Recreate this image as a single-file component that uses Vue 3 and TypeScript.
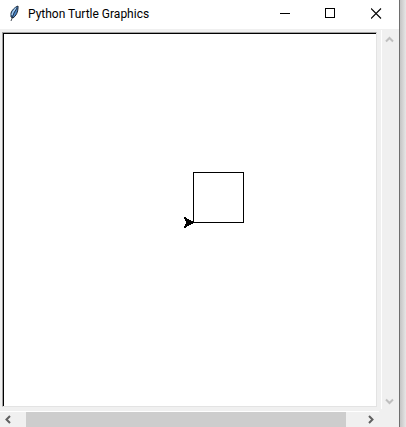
<script setup lang="ts">
import { ref } from 'vue'

const title = ref<string>('Python Turtle Graphics')
const side = 50
</script>

<template>
  <div class="desktop">
    <main class="window">
      <header class="titlebar">
        <svg class="feather" width="12" height="18" viewBox="0 0 12 18" aria-hidden="true">
          <path d="M10 2C7 3 4 6 3 9L3 13L5 14C8 12 10 8 10 4Z" fill="#4b86c8" stroke="#1c2836" stroke-width="1" />
          <path d="M8 4L5 8L4 11" fill="none" stroke="#a5cdf2" stroke-width="1.5" />
          <path d="M9 4L6 9L3 17" fill="none" stroke="#18202c" stroke-width="0.8" />
        </svg>
        <h1 class="title">{{ title }}</h1>
        <nav class="controls">
          <button type="button" aria-label="Minimize">
            <svg width="11" height="11" viewBox="0 0 11 11" shape-rendering="crispEdges"><path d="M1 5.5H11" stroke="#000" /></svg>
          </button>
          <button type="button" aria-label="Maximize">
            <svg width="11" height="11" viewBox="0 0 11 11" shape-rendering="crispEdges"><path d="M.5 .5H9.5V9.5H.5Z" stroke="#000" fill="none" /></svg>
          </button>
          <button type="button" aria-label="Close">
            <svg width="11" height="11" viewBox="0 0 11 11"><path d="M0 .5L10 10.500M10 .5L0 10.500" stroke="#000" stroke-width="1.1" /></svg>
          </button>
        </nav>
      </header>
      <section class="content">
        <div class="canvas">
          <svg class="drawing" width="64" height="60" viewBox="-10 -52 64 60" shape-rendering="crispEdges" role="img" aria-label="Square drawn by the turtle">
            <path :d="`M.5 .5H${side}.5V-${side - 0.5}H.5Z`" fill="none" stroke="#000" />
            <path d="M2 0H0V-1H-2V-2H-4V-3H-6V-4H-7V-5H-9V-3H-8V-1H-7V2H-8V4H-9V6H-7V5H-6V4H-4V3H-2V2H0V1H2Z" fill="#000" />
          </svg>
        </div>
        <div class="scroll vertical">
          <button type="button" aria-label="Scroll up">
            <svg width="9" height="9" viewBox="0 0 9 9"><path d="M1 6.500L4.500 3L8 6.500" /></svg>
          </button>
          <button type="button" aria-label="Scroll down">
            <svg width="9" height="9" viewBox="0 0 9 9"><path d="M1 3.500L4.500 7L8 3.500" /></svg>
          </button>
        </div>
        <div class="scroll horizontal">
          <button type="button" aria-label="Scroll left">
            <svg width="9" height="9" viewBox="0 0 9 9"><path d="M6 1L2.500 4.500L6 8" /></svg>
          </button>
          <div class="thumb"></div>
          <button type="button" aria-label="Scroll right">
            <svg width="9" height="9" viewBox="0 0 9 9"><path d="M3 1L6.500 4.500L3 8" /></svg>
          </button>
        </div>
      </section>
    </main>
  </div>
</template>

<style>
body {
  margin: 0;
}
</style>

<style scoped>
.desktop {
  box-sizing: border-box;
  height: 100vh;
  padding-right: 6px;
  background: linear-gradient(to left, #e6e6e6, #c4c4c4 6px);
}
.window {
  box-sizing: border-box;
  display: flex;
  flex-direction: column;
  height: 100%;
  border-right: 1px solid #6e6e6e;
  background: #f0f0f0;
  font-family: Roboto, "Noto Sans", sans-serif;
}
.titlebar {
  display: flex;
  align-items: center;
  height: 29px;
  background: #fff;
}
.feather {
  margin: 0 8px;
  padding-bottom: 3px;
}
.title {
  flex: 1;
  margin: 0;
  padding-bottom: 2px;
  font-size: 12px;
  font-weight: 400;
  line-height: 16px;
  white-space: nowrap;
  color: #000;
}
.controls {
  display: flex;
  height: 100%;
}
button {
  display: flex;
  align-items: center;
  justify-content: center;
  margin: 0;
  padding: 0;
  border: 0;
  background: transparent;
}
.controls button {
  width: 46px;
  padding-bottom: 3px;
}
.content {
  flex: 1;
  display: grid;
  grid-template-columns: 1fr 18px;
  grid-template-rows: 1fr 16px;
  column-gap: 4px;
  row-gap: 4px;
  min-height: 0;
}
.canvas {
  position: relative;
  margin: 3px 0 0 2px;
  border: 1px solid;
  border-color: #a0a0a0 #e3e3e3 #e3e3e3 #a0a0a0;
  background: #fff;
  box-shadow: inset 1px 1px #000;
}
.drawing {
  position: absolute;
  left: 180px;
  top: 137px;
}
.scroll {
  display: flex;
  justify-content: space-between;
}
.scroll path {
  fill: none;
  stroke: #606060;
  stroke-width: 2;
}
.vertical {
  flex-direction: column;
  margin: 1px 0 -2px;
  padding-right: 2px;
  border-left: 1px solid #fff;
}
.vertical path {
  stroke: #bfbfbf;
}
.vertical button {
  height: 18px;
}
.horizontal {
  margin-right: -2px;
  border-top: 1px solid #fff;
}
.horizontal button {
  width: 17px;
}
.thumb {
  flex: 1;
  margin: 0 16px 0 9px;
  background: #cdcdcd;
}
</style>
